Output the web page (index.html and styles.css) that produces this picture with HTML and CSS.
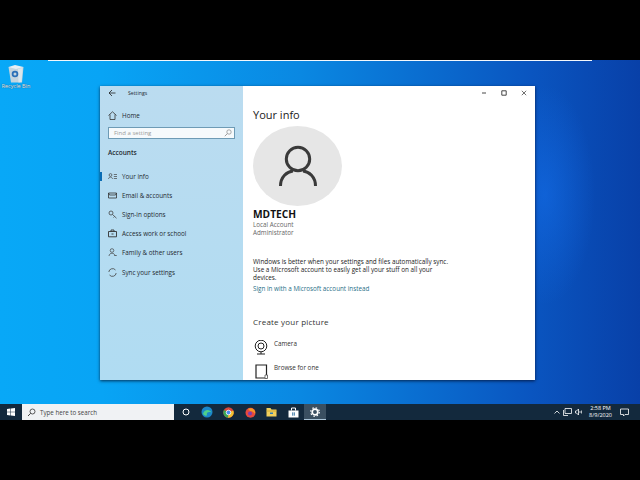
FILE: index.html
```html
<!DOCTYPE html>
<html lang="en">
<head>
    <meta charset="UTF-8">
    <title>Settings</title>
    <link rel="stylesheet" href="styles.css">
</head>
<body>
    <div class="bar_black"></div>

    <div class="desktop">
        <div class="top_line"></div>

        <div class="recycle">
            <svg width="18" height="19" viewBox="0 0 18 19">
                <path d="M1.500 3 L16.500 3 L15 18.500 L4 18.500 Z" fill="#c3d4de"/>
                <path d="M1.500 3 L8 1 L16.500 3 L9 5 Z" fill="#e8eff4"/>
                <path d="M11 5 L15.500 4 L14.500 18 L11.500 18.500 Z" fill="#dbe6ec"/>
                <circle cx="8" cy="10" r="2.400" fill="none" stroke="#2a70b8" stroke-width="1.800"/>
            </svg>
            <span>Recycle Bin</span>
        </div>

        <!-- settings window -->
        <div class="window">
            <div class="sidebar">
                <div class="title_row">
                    <svg class="back" width="8" height="8" viewBox="0 0 8 8"><path d="M7.500 4 H1 M4 1 L1 4 L4 7" fill="none" stroke="#222" stroke-width="0.800"/></svg>
                    <span>Settings</span>
                </div>
                <div class="side_item home">
                    <svg width="9" height="9" viewBox="0 0 9 9"><path d="M0.500 4.500 L4.500 0.800 L8.500 4.500 M2 3.500 V8.500 H7 V3.500" fill="none" stroke="#333" stroke-width="0.800"/></svg>
                    <span>Home</span>
                </div>
                <div class="search_box">
                    <span>Find a setting</span>
                    <svg width="8" height="8" viewBox="0 0 8 8"><circle cx="5" cy="3" r="2.200" fill="none" stroke="#888" stroke-width="0.700"/><path d="M3.400 4.600 L0.800 7.200" stroke="#888" stroke-width="0.800"/></svg>
                </div>
                <div class="section_name">Accounts</div>
                <ul class="side_list">
                    <li class="side_item active">
                        <svg width="9" height="9" viewBox="0 0 9 9"><circle cx="2.500" cy="3" r="1.400" fill="none" stroke="#444" stroke-width="0.700"/><path d="M0.500 7 C0.800 4.500 4.200 4.500 4.500 7 M5.800 2.500 H9 M5.800 4.500 H9 M5.800 6.500 H9" fill="none" stroke="#444" stroke-width="0.700"/></svg>
                        <span>Your info</span>
                    </li>
                    <li class="side_item">
                        <svg width="9" height="9" viewBox="0 0 9 9"><path d="M0.500 2 H8.500 V7 H0.500 Z M0.500 2 L1.500 4 H7.500 L8.500 2" fill="none" stroke="#333" stroke-width="0.800"/></svg>
                        <span>Email &amp; accounts</span>
                    </li>
                    <li class="side_item">
                        <svg width="9" height="9" viewBox="0 0 9 9"><circle cx="3" cy="3" r="2" fill="none" stroke="#444" stroke-width="0.800"/><path d="M4.500 4.500 L8.500 8.200 M6.500 6.500 L5.500 7.500" fill="none" stroke="#444" stroke-width="0.800"/></svg>
                        <span>Sign-in options</span>
                    </li>
                    <li class="side_item">
                        <svg width="9" height="9" viewBox="0 0 9 9"><path d="M0.500 2.500 H8.500 V7.800 H0.500 Z M3 2.500 V1 H6 V2.500 M3.500 5 H5.500" fill="none" stroke="#333" stroke-width="0.900"/></svg>
                        <span>Access work or school</span>
                    </li>
                    <li class="side_item">
                        <svg width="9" height="9" viewBox="0 0 9 9"><circle cx="4" cy="2.500" r="1.800" fill="none" stroke="#444" stroke-width="0.700"/><path d="M1 8 C1.300 4.300 6.700 4.300 7 8 M6.500 7.500 H8.800" fill="none" stroke="#444" stroke-width="0.700"/></svg>
                        <span>Family &amp; other users</span>
                    </li>
                    <li class="side_item">
                        <svg width="9" height="9" viewBox="0 0 9 9"><path d="M0.800 4 A3.800 3.800 0 0 1 7.500 2 M8.200 5 A3.800 3.800 0 0 1 1.500 7" fill="none" stroke="#444" stroke-width="0.800"/></svg>
                        <span>Sync your settings</span>
                    </li>
                </ul>
            </div>

            <div class="content">
                <div class="win_controls">
                    <svg width="6" height="6" viewBox="0 0 6 6"><path d="M1 3 H5" stroke="#333" stroke-width="0.900"/></svg>
                    <svg width="6" height="6" viewBox="0 0 6 6"><path d="M0.800 0.800 H5.200 V5.200 H0.800 Z" fill="none" stroke="#333" stroke-width="0.900"/></svg>
                    <svg width="6" height="6" viewBox="0 0 6 6"><path d="M0.800 0.800 L5.200 5.200 M5.200 0.800 L0.800 5.200" stroke="#333" stroke-width="0.700"/></svg>
                </div>
                <h1>Your info</h1>
                <div class="avatar">
                    <svg width="44" height="44" viewBox="0 0 44 44">
                        <circle cx="22" cy="15" r="11.700" fill="none" stroke="#3a3a3a" stroke-width="3"/>
                        <path d="M4.500 42 C4.500 33 11 27.500 17 27 M39.500 42 C39.500 33 33 27.500 27 27" fill="none" stroke="#3a3a3a" stroke-width="3"/>
                    </svg>
                </div>
                <div class="user_name">MDTECH</div>
                <div class="user_meta first_meta">Local Account</div>
                <div class="user_meta">Administrator</div>
                <p class="sync_text">Windows is better when your settings and files automatically sync. Use a Microsoft account to easily get all your stuff on all your devices.</p>
                <div class="ms_link">Sign in with a Microsoft account instead</div>
                <h2>Create your picture</h2>
                <div class="pic_row camera">
                    <svg width="14" height="15" viewBox="0 0 14 15"><circle cx="7" cy="6" r="5.800" fill="none" stroke="#222" stroke-width="1"/><circle cx="7" cy="6" r="3" fill="none" stroke="#222" stroke-width="1"/><path d="M3 14 H11 M7 12 V14" stroke="#222" stroke-width="1"/></svg>
                    <span>Camera</span>
                </div>
                <div class="pic_row browse">
                    <svg width="13" height="15" viewBox="0 0 13 15"><path d="M1 1 H11.500 V14 H1 Z" fill="none" stroke="#222" stroke-width="1.200"/><path d="M10 11 H12.500 V14.500 H10 Z" fill="#fff" stroke="#555" stroke-width="0.800"/></svg>
                    <span>Browse for one</span>
                </div>
            </div>
        </div>

        <div class="taskbar">
            <div class="start">
                <svg width="8" height="8" viewBox="0 0 8 8"><path d="M0 1 L3.500 0.500 V3.700 H0 Z M4 0.400 L8 0 V3.700 H4 Z M0 4.200 H3.500 V7.500 L0 7 Z M4 4.200 H8 V8 L4 7.600 Z" fill="#fff"/></svg>
            </div>
            <div class="task_search">
                <svg width="9" height="9" viewBox="0 0 9 9"><circle cx="5.500" cy="3.500" r="2.500" fill="none" stroke="#333" stroke-width="0.800"/><path d="M3.700 5.300 L1 8" stroke="#333" stroke-width="0.900"/></svg>
                <span>Type here to search</span>
            </div>
            <div class="task_icons">
                <div class="task_icon"><svg width="8" height="8" viewBox="0 0 8 8"><circle cx="4" cy="4" r="3" fill="none" stroke="#fff" stroke-width="1"/></svg></div>
                <div class="task_icon"><svg width="12" height="12" viewBox="0 0 12 12"><circle cx="6" cy="6" r="5.500" fill="#1b87c9"/><path d="M2 8 C3 3 9 3 10.500 6.500 C8 5.500 5 6 6 9.500 C4 10 2.500 9 2 8 Z" fill="#4fd08a"/></svg></div>
                <div class="task_icon"><svg width="11" height="11" viewBox="0 0 11 11"><circle cx="5.500" cy="5.500" r="5.200" fill="#d9483b"/><path d="M5.500 5.500 L10.300 3.500 A5.200 5.200 0 0 1 5 10.700 Z" fill="#f2c230"/><path d="M5.500 5.500 L5 10.700 A5.200 5.200 0 0 1 1 3 Z" fill="#3aa757"/><circle cx="5.500" cy="5.500" r="2.300" fill="#4a8af0" stroke="#fff" stroke-width="0.800"/></svg></div>
                <div class="task_icon"><svg width="11" height="11" viewBox="0 0 11 11"><circle cx="5.500" cy="5.700" r="5" fill="#e5483f"/><path d="M3 2 C7 0 11 3 10 7 C9 5 7 4 5 4 Z" fill="#f59a23"/><circle cx="5" cy="6.500" r="2" fill="#7a3fb0"/></svg></div>
                <div class="task_icon"><svg width="11" height="10" viewBox="0 0 11 10"><path d="M0.500 1 H4.500 L5.500 2.500 H10.500 V9.500 H0.500 Z" fill="#f0cf5c"/><path d="M0.500 4 H10.500" stroke="#c9a52e" stroke-width="0.800"/><path d="M4 5.500 H7 V7 H4 Z" fill="#2f7fb8"/></svg></div>
                <div class="task_icon"><svg width="11" height="11" viewBox="0 0 11 11"><path d="M0.500 3.500 H10.500 V10.500 H0.500 Z" fill="#fff"/><path d="M3.500 3.500 V1 H7.500 V3.500" fill="none" stroke="#fff" stroke-width="1"/><path d="M4 5.500 H5.300 V6.800 H4 Z M5.800 5.500 H7 V6.800 H5.800 Z M4 7.300 H5.300 V8.500 H4 Z M5.800 7.300 H7 V8.500 H5.800 Z" fill="#2f6f9e"/></svg></div>
                <div class="task_icon task_on"><svg width="10" height="10" viewBox="0 0 10 10"><circle cx="5" cy="5" r="2.800" fill="none" stroke="#fff" stroke-width="1.700"/><circle cx="5" cy="5" r="4.300" fill="none" stroke="#fff" stroke-width="1.200" stroke-dasharray="1.500 1.900"/></svg></div>
            </div>
            <div class="tray">
                <svg width="6" height="4" viewBox="0 0 6 4"><path d="M0.500 3.500 L3 1 L5.500 3.500" fill="none" stroke="#fff" stroke-width="0.800"/></svg>
                <svg width="9" height="8" viewBox="0 0 9 8"><path d="M2 0.500 H8.500 V5.500 H2 Z M0.500 2 V7.500 H5" fill="none" stroke="#fff" stroke-width="0.800"/></svg>
                <svg width="7" height="8" viewBox="0 0 7 8"><path d="M0.500 3 H1.500 L3.500 1 V7 L1.500 5 H0.500 Z" fill="none" stroke="#fff" stroke-width="0.800"/><path d="M5 3 V5 M6.500 2.500 V5.500" stroke="#fff" stroke-width="0.700"/></svg>
                <div class="clock"><div>2:58 PM</div><div>8/9/2020</div></div>
                <svg class="notify" width="9" height="9" viewBox="0 0 9 9"><path d="M0.500 1 H8.500 V6.500 H5 L3.500 8 V6.500 H0.500 Z" fill="none" stroke="#fff" stroke-width="0.800"/></svg>
            </div>
        </div>
    </div>

    <div class="bar_black"></div>
</body>
</html>
```

FILE: styles.css
```css
* {
    box-sizing: border-box;
}
html, body {
    margin: 0;
    padding: 0;
}
body {
    width: 640px;
    height: 480px;
    overflow: hidden;
    background: #000;
    font-family: "Open Sans", "Liberation Sans", sans-serif;
}
.bar_black {
    height: 60px;
    background: #000;
}
.desktop {
    position: relative;
    height: 360px;
    display: flex;
    flex-direction: column;
    justify-content: flex-end;
    background:
        radial-gradient(ellipse 50px 110px at 545px 135px, rgba(20, 110, 235, 0.55), rgba(20, 110, 235, 0) 100%),
        linear-gradient(90deg, #08a8f7 0%, #08a4f5 16%, #0a88e2 47%, #0a55c0 83%, #0840a8 100%);
}
.top_line {
    position: absolute;
    top: 0;
    left: 48px;
    width: 544px;
    height: 1px;
    background: #f4f8fc;
}
.recycle {
    position: absolute;
    top: 4px;
    left: 0;
    width: 32px;
    display: flex;
    flex-direction: column;
    align-items: center;
    color: #eaf4fb;
    font-size: 5.500px;
    line-height: 7px;
    white-space: nowrap;
    text-shadow: 0 0 1px #123;
}
.window {
    position: absolute;
    top: 26px;
    left: 100px;
    width: 435px;
    height: 294px;
    display: flex;
    box-shadow: 0 1px 3px rgba(0, 0, 20, 0.7);
}
.sidebar {
    width: 143px;
    flex-shrink: 0;
    padding: 0 8px;
    background: linear-gradient(180deg, #bbdcf0 0%, #b0dcf2 100%);
    color: #1f2a30;
    font-size: 6.300px;
}
.title_row {
    height: 13px;
    display: flex;
    align-items: center;
    font-size: 5.200px;
}
.back {
    margin-right: 12px;
}
.side_item {
    display: flex;
    align-items: center;
    gap: 5px;
    height: 19.200px;
    position: relative;
}
.side_item svg {
    flex-shrink: 0;
}
.home {
    margin-top: 9px;
    height: 14px;
}
.search_box {
    margin-top: 5px;
    width: 127px;
    height: 12px;
    display: flex;
    align-items: center;
    justify-content: space-between;
    padding: 0 2px 0 5px;
    background: #f6fafc;
    border: 1px solid #6e9bb5;
    color: #9a9a9a;
    font-size: 6px;
}
.section_name {
    margin-top: 9px;
    font-weight: 600;
    font-size: 6.500px;
    line-height: 10px;
}
.side_list {
    list-style: none;
    margin: 8.500px 0 0;
    padding: 0;
}
.active::before {
    content: "";
    position: absolute;
    left: -8px;
    top: 5px;
    width: 2px;
    height: 9px;
    background: #0a6db5;
}
.content {
    flex: 1;
    position: relative;
    padding: 0 0 0 10px;
    background: #fff;
    color: #222;
    overflow: hidden;
}
.win_controls {
    position: absolute;
    top: 4px;
    right: 8px;
    display: flex;
    gap: 14px;
}
h1 {
    margin: 21px 0 0;
    font-weight: 400;
    font-size: 11px;
    line-height: 16px;
    color: #222;
}
.avatar {
    width: 89px;
    height: 80px;
    margin-top: 3px;
    border-radius: 50%;
    background: #e6e6e6;
    display: flex;
    align-items: center;
    justify-content: center;
}
.user_name {
    margin-top: 3px;
    font-weight: 700;
    font-size: 10.200px;
    line-height: 11px;
    color: #111;
}
.user_meta {
    font-size: 6.300px;
    line-height: 8px;
    color: #666;
}
.first_meta {
    margin-top: 1px;
}
.sync_text {
    width: 200px;
    margin: 21px 0 0;
    font-size: 6.350px;
    line-height: 8px;
    color: #222;
}
.ms_link {
    margin-top: 3px;
    font-size: 6.300px;
    line-height: 8px;
    color: #2a6f88;
}
h2 {
    margin: 23px 0 0;
    font-weight: 400;
    font-size: 8px;
    line-height: 12px;
    letter-spacing: 0.200px;
    color: #333;
}
.pic_row {
    display: flex;
    gap: 6px;
    align-items: flex-start;
    font-size: 6.300px;
    line-height: 8px;
    color: #333;
}
.camera {
    margin-top: 12px;
    padding-left: 1px;
}
.browse {
    margin-top: 9px;
    padding-left: 2px;
}
.taskbar {
    height: 16px;
    display: flex;
    align-items: center;
    background: #13293d;
    color: #fff;
    position: relative;
}
.start {
    width: 22px;
    height: 16px;
    display: flex;
    align-items: center;
    justify-content: center;
}
.task_search {
    width: 152px;
    height: 16px;
    display: flex;
    align-items: center;
    gap: 4px;
    padding-left: 5px;
    background: #f0f2f4;
    color: #444;
    font-size: 6.200px;
}
.task_icons {
    display: flex;
    margin-left: 1px;
}
.task_icon {
    width: 21.500px;
    height: 16px;
    display: flex;
    align-items: center;
    justify-content: center;
}
.task_on {
    background: #3a4f61;
    border-bottom: 1px solid #a9c4d8;
}
.tray {
    margin-left: auto;
    display: flex;
    align-items: center;
    gap: 3px;
    padding-right: 11px;
}
.clock {
    margin: 0 5px 0 4px;
    text-align: center;
    font-size: 5.500px;
    line-height: 7px;
}
```
